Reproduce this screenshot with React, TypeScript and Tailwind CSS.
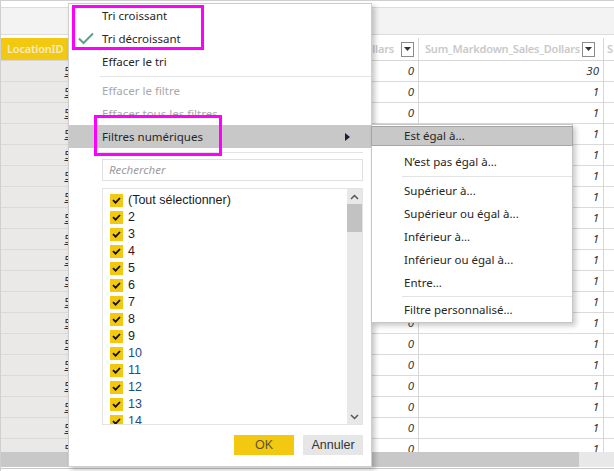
import React from "react";

const rows = Array.from({ length: 19 }, (_, i) => (i === 0 ? "30" : "1"));
const values = ["(Tout sélectionner)", "2", "3", "4", "5", "6", "7", "8", "9", "10", "11", "12", "13", "14"];
const subItems = ["Supérieur à...", "Supérieur ou égal à...", "Inférieur à...", "Inférieur ou égal à...", "Entre..."];

function Caret() {
  return (
    <span className="flex h-[15px] w-[13px] shrink-0 items-start justify-center border border-[#8c8c8c] bg-white pt-[4px]">
      <svg width="7" height="4" viewBox="0 0 7 4">
        <path d="M0 0h7L3.5 4z" fill="#333" />
      </svg>
    </span>
  );
}

function Chevron({ down }: { down?: boolean }) {
  return (
    <svg width="9" height="6" viewBox="0 0 9 6">
      <path d={down ? "M1 1l3.5 3.5L8 1" : "M1 5l3.5-3.5L8 5"} fill="none" stroke="#555" strokeWidth="1.5" />
    </svg>
  );
}

function MenuRow({ children, icon, muted }: { children: React.ReactNode; icon?: React.ReactNode; muted?: boolean }) {
  return (
    <div className={`flex h-[23px] shrink-0 items-center ${muted ? "text-[#a8a8a8]" : ""}`}>
      <span className="flex w-[33px] justify-center">{icon}</span>
      <span>{children}</span>
    </div>
  );
}

export default function App() {
  return (
    <div className="relative h-[471px] w-[614px] overflow-hidden bg-white font-['Noto_Sans',sans-serif] text-[#262626]">
      {/* table behind */}
      <div className="flex h-full flex-col border-l border-[#cfcfcf]">
        <div className="h-px shrink-0 bg-[#cfcfcf]" />
        <div className="h-[6px] shrink-0" />
        <div className="h-[28px] shrink-0 border-y border-[#dcdcdc] bg-[#f3f3f3]" />
        <div className="h-[3px] shrink-0" />

        <div className="flex h-[23px] shrink-0 border-b border-[#d6d6d6] text-[11px] font-semibold tracking-[-0.2px] text-[#c9c9c9]">
          <div className="flex w-[74px] items-center bg-[#f2c811] pl-[6px] text-[#f6ecc4]">LocationID</div>
          <div className="flex flex-1 items-center justify-end gap-[7px] border-r border-[#d6d6d6] pr-[4px]">
            <span>Sum_Regular_Sales_Dollars</span>
            <Caret />
          </div>
          <div className="flex w-[185px] items-center justify-between border-r border-[#d6d6d6] pl-[6px] pr-[8px]">
            <span>Sum_Markdown_Sales_Dollars</span>
            <Caret />
          </div>
          <div className="flex w-[10px] items-center pl-[3px]">S</div>
        </div>

        <div className="flex-1 overflow-hidden">
          {rows.map((v, i) => (
            <div key={i} className="flex h-[21px] border-b border-[#dadada] text-[11.5px] italic text-[#333]">
              <div className="flex w-[74px] items-center justify-end border-r border-[#d4d4d4] bg-[#ebe9e7] pr-[3px] not-italic text-[#3b2a20] underline">
                5
              </div>
              <div className="flex flex-1 items-center justify-end border-r border-[#d6d6d6] pr-[4px]">0</div>
              <div className="flex w-[185px] items-center justify-end border-r border-[#d6d6d6] pr-[4px]">{v}</div>
              <div className="w-[10px]" />
            </div>
          ))}
        </div>

        <div className="flex h-[15px] shrink-0 bg-[#e8e8e8]">
          <div className="w-[578px] bg-[#c8c8c8]" />
        </div>
        <div className="h-px shrink-0" />
        <div className="h-px shrink-0 bg-[#c8c8c8]" />
        <div className="h-[2px] shrink-0" />
      </div>

      {/* filter menu */}
      <div className="absolute left-[68px] top-[3px] flex h-[464px] w-[304px] flex-col border border-[#cdcdcd] bg-white text-[11.5px] shadow-[3px_3px_5px_rgba(0,0,0,0.22)]">
        <MenuRow>Tri croissant</MenuRow>
        <MenuRow
          icon={
            <svg width="16" height="13" viewBox="0 0 16 13">
              <path d="M1 6.5l4.5 4.5L15 1.5" fill="none" stroke="#5f9e8f" strokeWidth="2" />
            </svg>
          }
        >
          Tri décroissant
        </MenuRow>
        <MenuRow>Effacer le tri</MenuRow>
        <div className="ml-[31px] mt-[3px] h-px shrink-0 bg-[#e3e3e3]" />
        <div className="h-[2px] shrink-0" />
        <MenuRow muted>Effacer le filtre</MenuRow>
        <MenuRow muted>Effacer tous les filtres</MenuRow>
        <div className="flex h-[23px] shrink-0 items-center justify-between bg-[#c8c8c8] pl-[33px] pr-[21px]">
          <span>Filtres numériques</span>
          <svg width="5" height="8" viewBox="0 0 5 8">
            <path d="M0 0l5 4-5 4z" fill="#1a1f33" />
          </svg>
        </div>
        <div className="ml-[31px] mr-[8px] mt-[4px] h-px shrink-0 bg-[#e3e3e3]" />

        <div className="ml-[33px] mr-[8px] mt-[6px] flex h-[22px] shrink-0 items-center border border-[#e0e0e0] pl-[6px] italic text-[#9b9b9b]">
          Rechercher
        </div>

        <div className="ml-[33px] mr-[8px] mt-[7px] flex h-[237px] shrink-0 border border-[#e3e3e3] font-['Liberation_Sans',sans-serif] text-[12.5px]">
          <div className="flex-1 overflow-hidden pl-[7px] pt-[3px]">
            {values.map((v, i) => (
              <div key={v} className="flex h-[17px] items-center gap-[5px]">
                <span className="flex h-[13px] w-[13px] items-center justify-center bg-[#f2c811]">
                  <svg width="9" height="7" viewBox="0 0 9 7">
                    <path d="M1 3.2l2.6 2.5L8 1" fill="none" stroke="#111" strokeWidth="1.8" />
                  </svg>
                </span>
                <span className={i >= 9 ? "text-[#1a4d8a]" : i === 3 ? "text-[#4a1010]" : "text-[#1c1c1c]"}>{v}</span>
              </div>
            ))}
          </div>
          <div className="flex w-[15px] flex-col bg-[#e8e8e8]">
            <div className="flex h-[15px] items-center justify-center">
              <Chevron />
            </div>
            <div className="h-[28px] bg-[#c2c2c2]" />
            <div className="flex-1" />
            <div className="flex h-[15px] items-center justify-center">
              <Chevron down />
            </div>
          </div>
        </div>

        <div className="mr-[8px] mt-[10px] flex shrink-0 justify-end gap-[9px] font-['Liberation_Sans',sans-serif] text-[12.5px]">
          <button className="h-[20px] w-[60px] bg-[#f2c811] text-[#5e5535]">OK</button>
          <button className="h-[20px] w-[60px] bg-[#e6e6e6] text-[#333]">Annuler</button>
        </div>
      </div>

      {/* numeric filters submenu */}
      <div className="absolute left-[371px] top-[124px] flex h-[199px] w-[202px] flex-col border border-[#c6c6c6] bg-white text-[11.5px] shadow-[3px_3px_5px_rgba(0,0,0,0.2)]">
        <div className="-mx-px mt-px flex h-[20px] shrink-0 items-center border border-[#a5a5a5] bg-[#c8c8c8] pl-[32px]">
          Est égal à...
        </div>
        <div className="mt-[4px] flex h-[23px] shrink-0 items-center pl-[32px]">N’est pas égal à...</div>
        <div className="ml-[30px] mt-[3px] h-px shrink-0 bg-[#e3e3e3]" />
        <div className="h-[2px] shrink-0" />
        {subItems.map((s) => (
          <div key={s} className="flex h-[23px] shrink-0 items-center pl-[32px]">
            {s}
          </div>
        ))}
        <div className="ml-[30px] mt-[2px] h-px shrink-0 bg-[#e3e3e3]" />
        <div className="mt-[2px] flex h-[22px] shrink-0 items-center pl-[32px]">Filtre personnalisé...</div>
      </div>

      {/* callout boxes */}
      <div className="absolute left-[72px] top-[5px] h-[45px] w-[132px] border-[3px] border-[#ff00ff]" />
      <div className="absolute left-[94px] top-[115px] h-[41px] w-[128px] border-[3px] border-[#ff00ff]" />
    </div>
  );
}
